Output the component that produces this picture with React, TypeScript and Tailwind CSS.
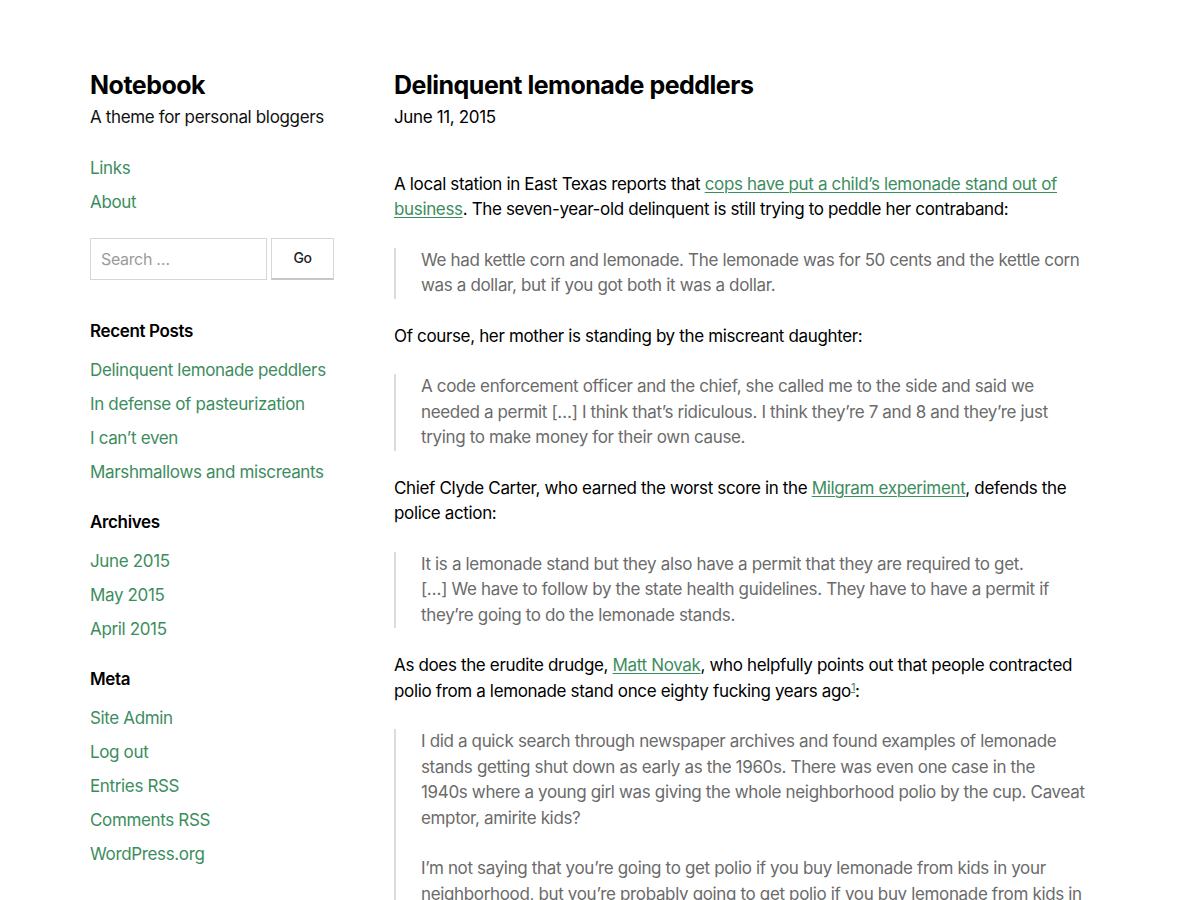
const green = "text-[#3c8d5e]";

const SideLink = ({ children }: { children: React.ReactNode }) => (
  <li className="h-[34px] flex items-center">
    <a className={`${green} no-underline`} href="#">{children}</a>
  </li>
);

const Widget = ({ title, items }: { title: string; items: string[] }) => (
  <section className="mt-[16px]">
    <h2 className="font-semibold text-black h-[34px] flex items-center">{title}</h2>
    <ul className="mt-[5px]">
      {items.map((i) => (
        <SideLink key={i}>{i}</SideLink>
      ))}
    </ul>
  </section>
);

const Quote = ({ children }: { children: React.ReactNode }) => (
  <blockquote className="border-l-2 border-[#dcdcdc] pl-[25px] text-[#6b6b6b] my-[25px]">
    {children}
  </blockquote>
);

const A = ({ children }: { children: React.ReactNode }) => (
  <a href="#" className={`${green} underline underline-offset-2 decoration-1`}>{children}</a>
);

const App = () => {
  return (
    <div className="bg-white min-h-[900px] h-[900px] overflow-hidden font-['Inter',sans-serif] text-[17px] leading-[25.5px] text-[#111] tracking-[-0.35px]">
      <div className="flex pl-[90px] pt-[68px]">
        <aside className="w-[244px] shrink-0">
          <h1 className="text-[25px] font-bold leading-[34px] text-black tracking-[-0.5px]">Notebook</h1>
          <p className="mt-[3px]">A theme for personal bloggers</p>
          <ul className="mt-[21px]">
            <SideLink>Links</SideLink>
            <SideLink>About</SideLink>
          </ul>
          <form className="flex gap-[4px] mt-[18px]">
            <input
              placeholder="Search …"
              className="w-[177px] h-[42px] border border-[#d6d6d6] px-[10px] text-[16px] placeholder:text-[#9b9b9b] outline-none"
            />
            <button type="button" className="w-[63px] h-[42px] border border-[#d6d6d6] border-b-2 border-b-[#c8c8c8] text-[14px] font-medium text-[#222]">
              Go
            </button>
          </form>
          <div className="mt-[35px]">
            <Widget title="Recent Posts" items={["Delinquent lemonade peddlers", "In defense of pasteurization", "I can’t even", "Marshmallows and miscreants"]} />
            <Widget title="Archives" items={["June 2015", "May 2015", "April 2015"]} />
            <Widget title="Meta" items={["Site Admin", "Log out", "Entries RSS", "Comments RSS", "WordPress.org"]} />
          </div>
        </aside>
        <main className="ml-[60px] w-[692px]">
          <h1 className="text-[25px] font-bold leading-[34px] text-black tracking-[-0.5px]">Delinquent lemonade peddlers</h1>
          <p className="mt-[3px] text-black">June 11, 2015</p>
          <div className="mt-[41px] text-black">
            <p>
              A local station in East Texas reports that <A>cops have put a child’s lemonade stand out of business</A>. The seven-year-old delinquent is still trying to peddle her contraband:
            </p>
            <Quote>
              <p>We had kettle corn and lemonade. The lemonade was for 50 cents and the kettle corn was a dollar, but if you got both it was a dollar.</p>
            </Quote>
            <p>Of course, her mother is standing by the miscreant daughter:</p>
            <Quote>
              <p>A code enforcement officer and the chief, she called me to the side and said we needed a permit […] I think that’s ridiculous. I think they’re 7 and 8 and they’re just trying to make money for their own cause.</p>
            </Quote>
            <p>
              Chief Clyde Carter, who earned the worst score in the <A>Milgram experiment</A>, defends the police action:
            </p>
            <Quote>
              <p>It is a lemonade stand but they also have a permit that they are required to get.<br />[…] We have to follow by the state health guidelines. They have to have a permit if they’re going to do the lemonade stands.</p>
            </Quote>
            <p>
              As does the erudite drudge, <A>Matt Novak</A>, who helpfully points out that people contracted polio from a lemonade stand once eighty fucking years ago<sup className={`${green} underline text-[11px]`}>1</sup>:
            </p>
            <Quote>
              <p>I did a quick search through newspaper archives and found examples of lemonade stands getting shut down as early as the 1960s. There was even one case in the<br />1940s where a young girl was giving the whole neighborhood polio by the cup. Caveat emptor, amirite kids?</p>
              <p className="mt-[25px]">I’m not saying that you’re going to get polio if you buy lemonade from kids in your neighborhood, but you’re probably going to get polio if you buy lemonade from kids in your neighborhood.</p>
            </Quote>
          </div>
        </main>
      </div>
    </div>
  );
};

export default App;
